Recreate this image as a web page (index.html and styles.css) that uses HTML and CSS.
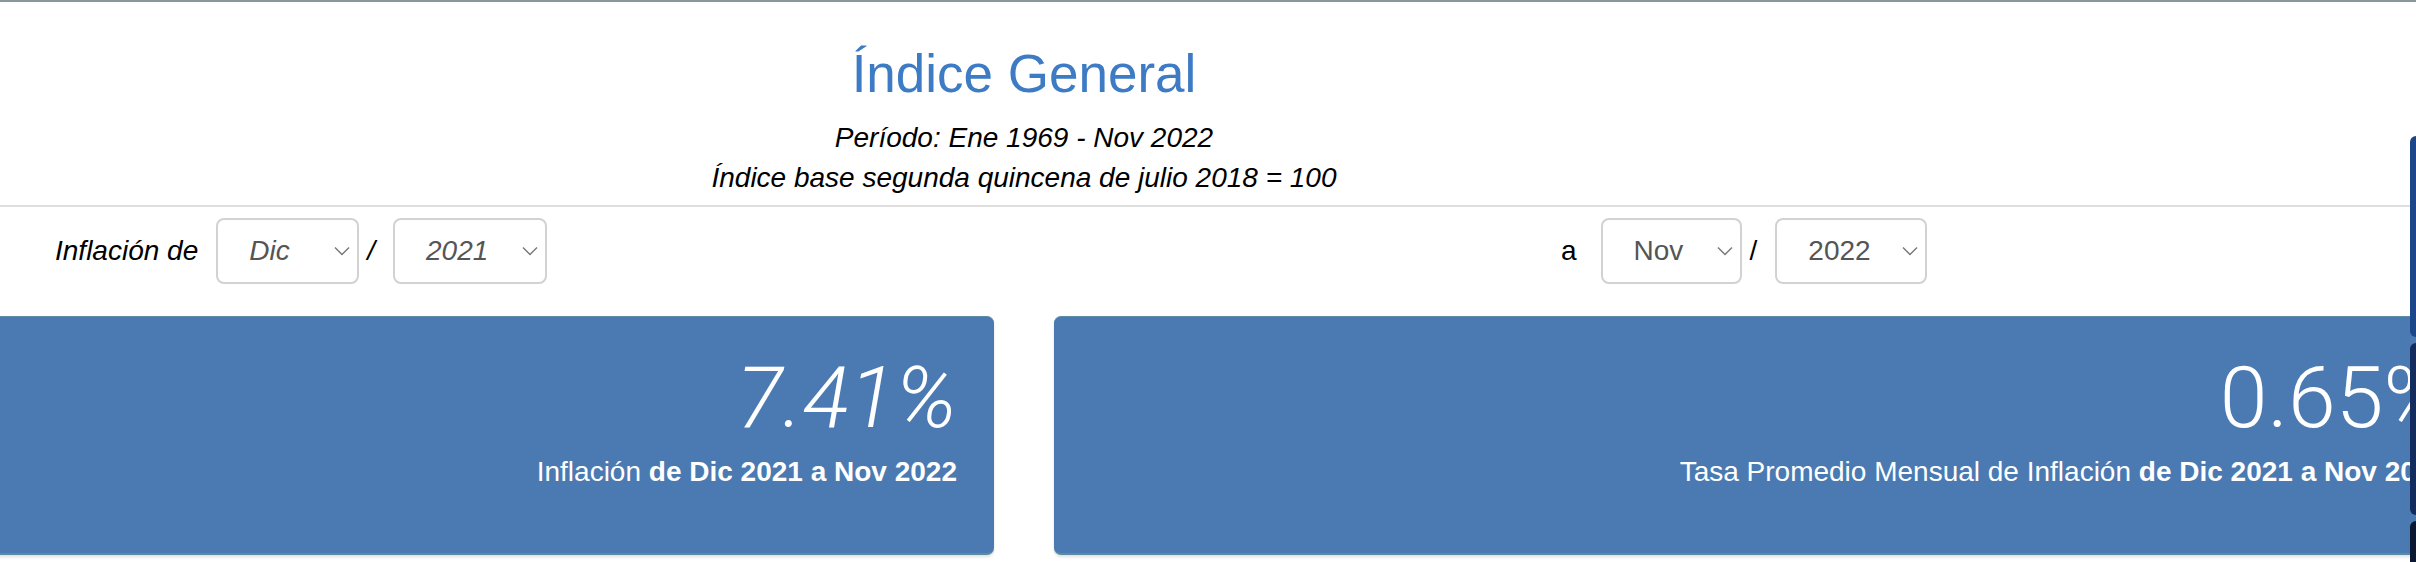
FILE: index.html
```html
<!DOCTYPE html>
<html lang="es">
<head>
<meta charset="utf-8">
<title>Índice General</title>
<link rel="stylesheet" href="styles.css">
</head>
<body>
<div class="topbar"></div>
<header class="header">
  <h1 class="title">Índice General</h1>
  <p class="subtitle">Período: Ene 1969 - Nov 2022</p>
  <p class="subtitle">Índice base segunda quincena de julio 2018 = 100</p>
</header>
<hr class="divider">
<section class="filters">
  <div class="filter-group filter-from">
    <span class="filter-label italic">Inflación de</span>
    <div class="select select-month italic"><span class="select-text">Dic</span><svg class="chev" viewBox="0 0 16 10" width="16" height="10"><path d="M1 1.5 L8 8.5 L15 1.5" fill="none" stroke="#777" stroke-width="1.4"/></svg></div>
    <span class="slash italic">/</span>
    <div class="select select-year italic"><span class="select-text">2021</span><svg class="chev" viewBox="0 0 16 10" width="16" height="10"><path d="M1 1.5 L8 8.5 L15 1.5" fill="none" stroke="#777" stroke-width="1.4"/></svg></div>
  </div>
  <div class="filter-group filter-to">
    <span class="filter-label filter-label-a">a</span>
    <div class="select select-month2"><span class="select-text">Nov</span><svg class="chev" viewBox="0 0 16 10" width="16" height="10"><path d="M1 1.5 L8 8.5 L15 1.5" fill="none" stroke="#777" stroke-width="1.4"/></svg></div>
    <span class="slash">/</span>
    <div class="select select-year2"><span class="select-text">2022</span><svg class="chev" viewBox="0 0 16 10" width="16" height="10"><path d="M1 1.5 L8 8.5 L15 1.5" fill="none" stroke="#777" stroke-width="1.4"/></svg></div>
  </div>
</section>
<section class="cards">
  <div class="card card-left">
    <div class="card-value italic">7.41%</div>
    <div class="card-caption">Inflación <b>de Dic 2021 a Nov 2022</b></div>
  </div>
  <div class="card card-right">
    <div class="card-value">0.65%</div>
    <div class="card-caption">Tasa Promedio Mensual de Inflación <b>de Dic 2021 a Nov 2022</b></div>
  </div>
</section>
<aside class="side-tabs">
  <div class="side-tab tab-1"></div>
  <div class="side-tab tab-2"></div>
  <div class="side-tab tab-3"></div>
</aside>
</body>
</html>
```

FILE: styles.css
```css
html, body {
  margin: 0;
  padding: 0;
  background: #fff;
  overflow: hidden;
}
body {
  font-family: "Liberation Sans", Arial, Helvetica, sans-serif;
  color: #000;
  width: 2416px;
  height: 562px;
}
.italic { font-style: italic; }

.topbar {
  height: 2px;
  background: #8b969b;
}

.header {
  width: 2048px;
  text-align: center;
}
.title {
  margin: 41px 0 0;
  font-size: 53px;
  line-height: 62px;
  font-weight: 400;
  color: #3d7bc4;
}
.subtitle {
  margin: 0;
  font-size: 28px;
  line-height: 40px;
  font-style: italic;
}
.header .title + .subtitle { margin-top: 13px; }

.divider {
  margin: 7px 0 0;
  border: 0;
  height: 2px;
  background: #dedede;
}

.filters {
  display: grid;
  grid-template-columns: 1506px 1fr;
  margin-top: 11px;
}
.filter-group {
  display: flex;
  align-items: center;
  font-size: 28px;
}
.filter-from { padding-left: 55px; }
.filter-to { padding-left: 55px; }
.filter-label { margin-right: 18px; }
.filter-label-a { margin-right: 24px; }
.slash { margin: 0 18px 0 8px; }

.select {
  box-sizing: border-box;
  height: 66px;
  display: flex;
  align-items: center;
  border: 2px solid #d2d2d2;
  border-radius: 8px;
  padding: 0 7px 0 31px;
  color: #555;
  background: #fff;
}
.select-text { flex: 1; }
.chev { flex: none; }
.select-month { width: 143px; }
.select-year { width: 154px; }
.select-month2 { width: 141px; }
.select-year2 { width: 152px; }

.cards {
  display: flex;
  gap: 60px;
  margin: 32px 0 0 -40px;
  width: 3000px;
}
.card {
  box-sizing: border-box;
  height: 239px;
  background: #4a7ab1;
  border-top: 1px solid #5a8ea6;
  border-bottom: 2px solid #5b8ba3;
  border-radius: 7px;
  box-shadow: 0 2px 3px rgba(0, 0, 0, 0.12);
  color: #fff;
  text-align: right;
  padding: 31px 37px 0 0;
}
.card-left { width: 1034px; }
.card-right { width: 1430px; }
.card-value {
  font-family: Roboto, "Liberation Sans", sans-serif;
  font-weight: 300;
  font-size: 86px;
  line-height: 100px;
}
.card-caption {
  margin-top: 4px;
  font-size: 28px;
  line-height: 40px;
}
.card-caption b { font-weight: 700; }

.side-tabs {
  position: fixed;
  top: 136px;
  right: 0;
  width: 6px;
  display: flex;
  flex-direction: column;
  gap: 6px;
}
.side-tab {
  border-radius: 8px 0 0 8px;
}
.tab-1 { height: 201px; background: #1d4589; }
.tab-2 { height: 172px; background: #142b5e; }
.tab-3 { height: 60px; background: #0c1831; }
```
